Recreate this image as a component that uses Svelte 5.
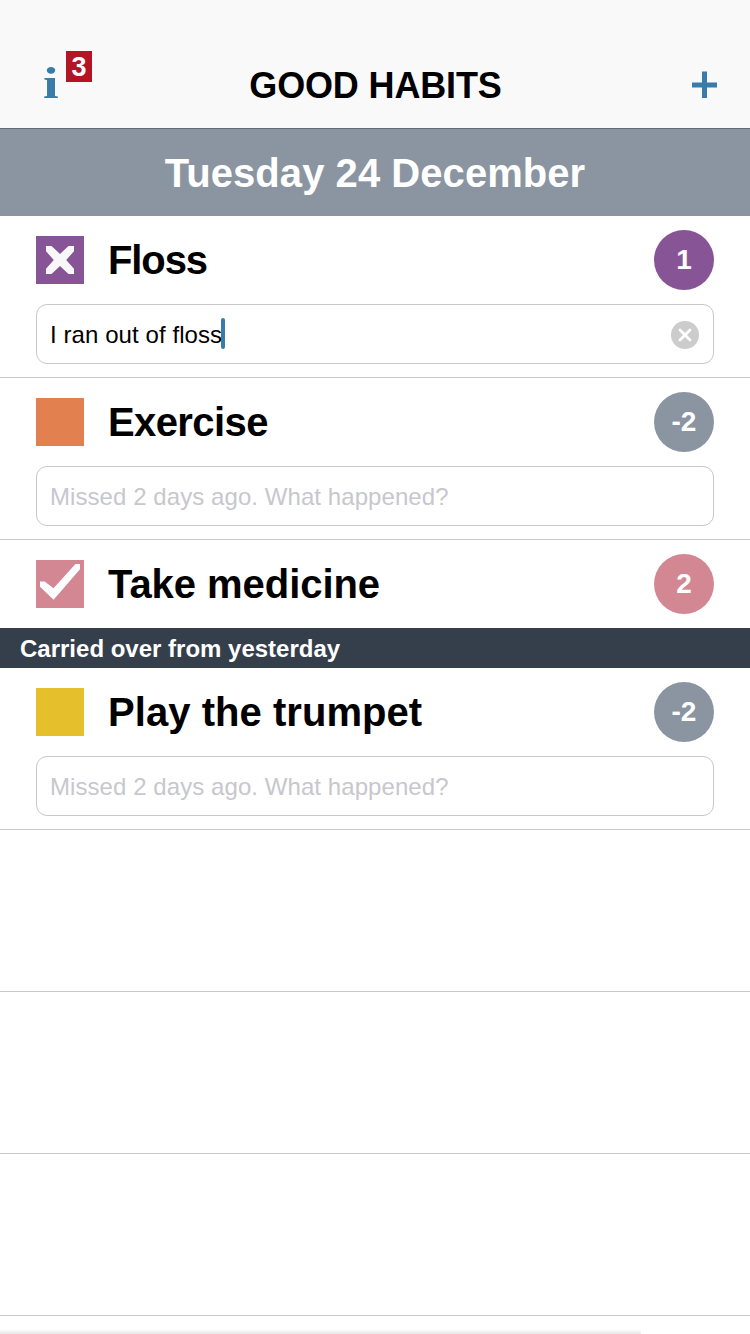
<script>
  const habits = [
    { name: 'Floss', color: '#875596', streak: '1', mark: 'cross', note: 'I ran out of floss', ls: '-1.1px' },
    { name: 'Exercise', color: '#e2814f', streak: '-2', placeholder: true, ls: '-0.6px' },
    { name: 'Take medicine', color: '#d28792', streak: '2', mark: 'check', ls: '-0.05px' }
  ];
  const carried = [
    { name: 'Play the trumpet', color: '#e6bf2d', streak: '-2', placeholder: true, ls: '0.05px' }
  ];
  const blanks = [1, 2, 3];
</script>

{#snippet habit(h)}
  <section class="habit" class:tall={h.note || h.placeholder}>
    <div class="line">
      <div class="box" style="background:{h.color}">
        {#if h.mark === 'cross'}
          <svg width="48" height="48" viewBox="0 0 48 48"><path fill="#f8f8f8" d="M10 10H15.5L24 18L32.5 10H38V15.2L30.2 24L38 32.8V38H32.5L24 30L15.5 38H10V32.8L17.8 24L10 15.2Z" /></svg>
        {:else if h.mark === 'check'}
          <svg width="48" height="48" viewBox="0 0 48 48"><path fill="#fff" d="M4 21.5H8.7L17.5 28.2L39.5 4H44V9.3L17.6 39.7L4 26.7Z" /></svg>
        {/if}
      </div>
      <h2><span style="letter-spacing:{h.ls}">{h.name}</span></h2>
      <div class="streak" style="background:{h.streak[0] === '-' ? '#8b95a1' : h.color}">{h.streak}</div>
    </div>
    {#if h.note}
      <div class="field">
        <span class="note">{h.note}</span><i class="caret"></i>
        <svg class="clear" width="28" height="28" viewBox="0 0 28 28"><circle cx="14" cy="14" r="14" fill="#ccc" /><path d="M9 9L19 19M19 9L9 19" stroke="#fff" stroke-width="2.8" stroke-linecap="round" /></svg>
      </div>
    {:else if h.placeholder}
      <div class="field"><span class="hint">Missed 2 days ago. What happened?</span></div>
    {/if}
  </section>
{/snippet}

<main>
  <header>
    <div class="info"><span class="i">i</span><span class="badge">3</span></div>
    <h1>GOOD HABITS</h1>
    <svg class="plus" width="26" height="28" viewBox="0 0 26 28"><path fill="#3a7ca8" d="M10 0.5H15V11.5H25V16.5H15V27H10V16.5H0V11.5H10Z" /></svg>
  </header>
  <div class="date"><span>Tuesday 24 December</span></div>
  {#each habits as h}{@render habit(h)}{/each}
  <div class="carried"><span>Carried over from yesterday</span></div>
  {#each carried as h}{@render habit(h)}{/each}
  {#each blanks as b (b)}<div class="blank"></div>{/each}
  <div class="foot"><div class="shade"></div></div>
</main>

<style>
  :global(body) { margin: 0; background: #fff; }
  main {
    width: 750px; height: 1334px; overflow: hidden; display: flex; flex-direction: column;
    font-family: "Liberation Sans", Arial, sans-serif; color: #000; background: #fff;
  }
  main > * { flex: none; }
  * { box-sizing: border-box; }
  h1, h2 { margin: 0; font-weight: bold; white-space: nowrap; }
  header {
    height: 128px; background: #f9f9f9; padding: 40px 32px 0 33px;
    display: grid; grid-template-columns: 100px 1fr 100px; align-items: start;
  }
  .info { display: flex; height: 80px; padding: 11px 0 0 10px; }
  .i {
    font: bold 44px/44px "Liberation Serif", serif; color: #3a7ca8; width: 23px;
    margin-top: 11px; transform: scaleX(1.28); transform-origin: 0 0;
  }
  .badge { width: 26px; height: 31px; background: #b51427; color: #fff; font-weight: bold; font-size: 27px; line-height: 32px; text-align: center; }
  h1 { font-size: 36px; line-height: 44px; padding-top: 24px; text-align: center; letter-spacing: -0.15px; }
  .plus { justify-self: end; margin-top: 31px; }
  .date {
    height: 88px; background: #8b95a1; border-top: 1px solid #5f6b78; color: #fff; letter-spacing: 0.05px;
    font-weight: bold; font-size: 40px; line-height: 89px; text-align: center; white-space: nowrap;
  }
  .habit { height: 88px; padding: 14px 36px 0; }
  .habit.tall { height: 162px; border-bottom: 1px solid #c8c8c8; }
  .line { display: flex; align-items: center; height: 60px; }
  .box { width: 48px; height: 48px; margin-right: 24px; }
  .box svg { display: block; }
  h2 { flex: 1; font-size: 40px; line-height: 60px; }
  .streak { width: 60px; height: 60px; border-radius: 50%; color: #fff; font-weight: bold; font-size: 28px; line-height: 60px; text-align: center; }
  .field { height: 60px; margin-top: 14px; border: 1px solid #c8c8c8; border-radius: 11px; padding: 0 14px 0 13px; display: flex; align-items: center; font-size: 24px; line-height: 56px; white-space: nowrap; }
  .note, .hint { padding-top: 2px; }
  .note { letter-spacing: 0.08px; }
  .hint { color: #c7c7cd; letter-spacing: 0.07px; }
  .caret { width: 4px; height: 31px; border-radius: 2px; background: #3a7ca8; margin: 0 0 1px -1px; }
  .clear { margin-left: auto; margin-top: 1px; }
  .carried { height: 40px; background: #353f4c; color: #fff; padding-left: 20px; font-weight: bold; font-size: 24px; line-height: 42px; }
  .blank { height: 162px; border-bottom: 1px solid #c8c8c8; }
  .foot { height: 18px; display: flex; align-items: flex-end; }
  .shade { width: 641px; height: 5px; background: linear-gradient(#fff, #e6e6e6); border-radius: 0 4px 0 0; }
</style>
